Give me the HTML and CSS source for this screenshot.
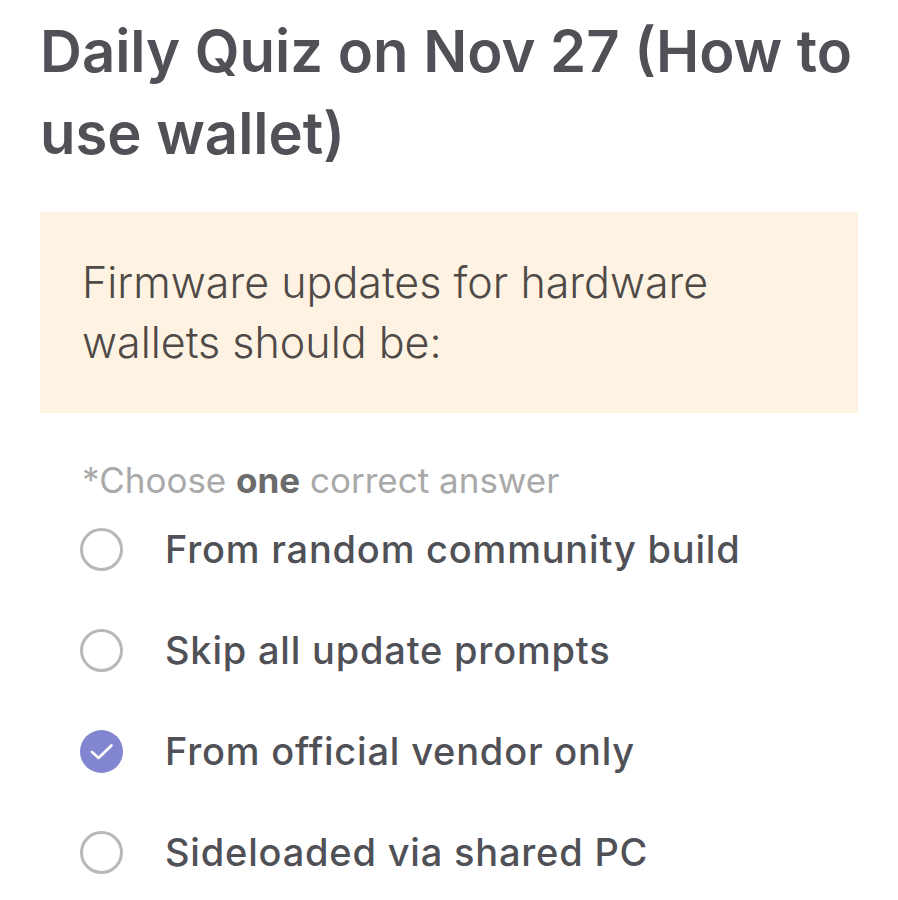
FILE: index.html
```html
<!DOCTYPE html>
<html lang="en">
<head>
  <meta charset="UTF-8">
  <meta name="viewport" content="width=device-width, initial-scale=1.0">
  <title>Daily Quiz</title>
  <link rel="stylesheet" href="styles.css">
</head>
<body>
  <div class="quiz">
    <h1 class="quiz-title">Daily Quiz on Nov 27 (How to use wallet)</h1>
    <div class="question">Firmware updates for hardware wallets should be:</div>
    <div class="hint">*Choose <b>one</b> correct answer</div>
    <div class="options">
      <div class="option">
        <span class="radio"></span>
        <span class="option-text">From random community build</span>
      </div>
      <div class="option">
        <span class="radio"></span>
        <span class="option-text">Skip all update prompts</span>
      </div>
      <div class="option">
        <span class="radio checked">
          <svg width="43" height="43" viewBox="0 0 43 43"><path d="M12 22l6.5 6L31.5 15.5" fill="none" stroke="#fff" stroke-width="2.6" stroke-linecap="round" stroke-linejoin="round"/></svg>
        </span>
        <span class="option-text">From official vendor only</span>
      </div>
      <div class="option">
        <span class="radio"></span>
        <span class="option-text">Sideloaded via shared PC</span>
      </div>
    </div>
  </div>
</body>
</html>
```

FILE: styles.css
```css
* {
  box-sizing: border-box;
}
body {
  margin: 0;
  padding: 0;
  background: #ffffff;
  font-family: Inter, "Noto Sans", sans-serif;
}

.quiz {
  padding: 10px 40px 0 40px;
}

.quiz-title {
  margin: 0 0 38px 0;
  font-size: 58px;
  font-weight: 600;
  line-height: 82px;
  color: #505157;
}

.question {
  background-color: #fef3e2;
  padding: 40px 42px 41px 42px;
  font-size: 43px;
  font-weight: 300;
  line-height: 60px;
  color: #4f4a48;
}

.hint {
  margin-top: 46px;
  padding-left: 42px;
  font-size: 35px;
  color: #a9a9a9;
}
.hint b {
  color: #6b6b6b;
  font-weight: 700;
}

.options {
  display: flex;
  flex-direction: column;
  gap: 57px;
  margin-top: 26px;
  padding-left: 40px;
}
.option {
  display: flex;
  align-items: center;
  gap: 42px;
  height: 44px;
}
.radio {
  width: 43px;
  height: 43px;
  border-radius: 50%;
  border: 3px solid #b8b8b8;
  flex-shrink: 0;
}
.radio.checked {
  border: none;
  background-color: #8285d0;
}
.radio svg {
  display: block;
}
.option-text {
  font-size: 38px;
  font-weight: 500;
  letter-spacing: 0.8px;
  color: #505157;
}
```
